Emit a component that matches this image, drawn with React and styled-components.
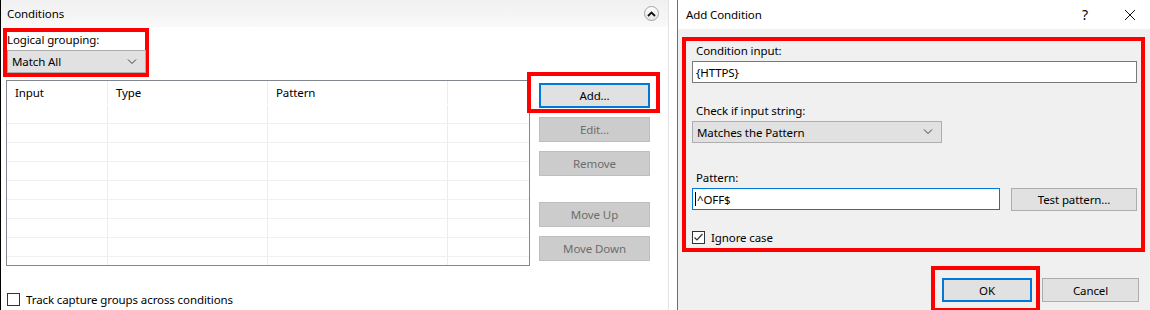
import React from 'react';
import styled, { createGlobalStyle } from 'styled-components';

const GlobalStyle = createGlobalStyle`
  html, body {
    margin: 0;
    padding: 0;
    background: #fff;
  }
  body {
    font-family: "Noto Sans", "Liberation Sans", sans-serif;
    font-size: 11.5px;
    letter-spacing: -0.1px;
    color: #000;
  }
  * {
    box-sizing: border-box;
  }
`;

const Screen = styled.div`
  display: flex;
  width: 1150px;
  height: 310px;
  overflow: hidden;
  background: #fff;
`;

/* ---------- left: Conditions panel ---------- */

const Panel = styled.section`
  width: 670px;
  height: 310px;
  display: flex;
  flex-direction: column;
  border-left: 1px solid #000;
  border-right: 1px solid #e3e3e3;
  background: #fff;
`;

const PanelHeader = styled.div`
  height: 27px;
  flex: none;
  display: flex;
  align-items: center;
  justify-content: space-between;
  padding: 0 9px 0 6px;
  background: linear-gradient(to bottom, #f0f0f0, #f9f9f9);
`;

const CollapseButton = styled.div`
  width: 15px;
  height: 15px;
  border-radius: 50%;
  border: 1px solid #a3a3a3;
  background: linear-gradient(to bottom, #ffffff, #e4e4e4);
  display: flex;
  align-items: center;
  justify-content: center;
`;

const PanelBody = styled.div`
  flex: 1;
  display: flex;
  flex-direction: column;
  padding: 1px 0 0 2px;
`;

const Highlight = styled.div`
  border: 4px solid #ff0000;
`;

const GroupingBox = styled(Highlight)`
  width: 146px;
  align-self: flex-start;
`;

const Label = styled.div`
  height: 16px;
  line-height: 16px;
  padding-left: ${p => p.$indent || 0}px;
  margin-bottom: 2px;
  white-space: nowrap;
`;

const Select = styled.div`
  height: ${p => p.$h || 23}px;
  width: ${p => p.$w}px;
  margin-right: ${p => p.$overhang || 0}px;
  display: flex;
  align-items: center;
  justify-content: space-between;
  padding: 0 8px 0 4px;
  background: #e1e1e1;
  border: 1px solid #adadad;
  white-space: nowrap;
`;

const Chevron = () => (
  <svg width="10" height="6" viewBox="0 0 10 6">
    <polyline points="1,0.5 5,4.5 9,0.5" fill="none" stroke="#3c3c3c" strokeWidth="1" />
  </svg>
);

const Workspace = styled.div`
  display: flex;
  margin-top: 3px;
  padding-left: 3px;
`;

const ListView = styled.div`
  width: 524px;
  height: 186px;
  border: 1px solid #828790;
  overflow: hidden;
  background: #fff;
`;

const Row = styled.div`
  display: flex;
  height: ${p => (p.$head ? 24 : 19)}px;
  border-bottom: 1px solid ${p => (p.$head ? 'transparent' : '#f0f0f0')};
`;

const Cell = styled.div`
  width: ${p => p.$w}px;
  flex: ${p => (p.$w ? 'none' : 1)};
  border-right: 1px solid ${p => (p.$w ? '#ececec' : 'transparent')};
  padding: 4px 0 0 8px;
  line-height: 16px;
`;

const ButtonColumn = styled.div`
  display: flex;
  flex-direction: column;
  width: 111px;
  margin-left: 9px;
  padding-top: 3px;
`;

const Button = styled.div`
  height: ${p => p.$h || 25}px;
  width: ${p => (p.$w ? `${p.$w}px` : 'auto')};
  display: flex;
  align-items: center;
  justify-content: center;
  margin-top: ${p => p.$gap || 0}px;
  background: ${p => (p.$disabled ? '#cccccc' : '#e1e1e1')};
  border: ${p => (p.$focus ? '2px solid #0078d7' : `1px solid ${p.$disabled ? '#bfbfbf' : '#adadad'}`)};
  color: ${p => (p.$disabled ? '#6d6d6d' : '#000')};
  white-space: nowrap;
`;

const AddHighlight = styled(Highlight)`
  margin: -11px -10px -5px -12px;
  padding: 7px 6px 1px 8px;
`;

const CheckRow = styled.label`
  display: flex;
  align-items: center;
  gap: 6px;
  height: 16px;
  margin-top: ${p => p.$top || 0}px;
  padding-left: ${p => p.$left || 0}px;
  white-space: nowrap;
`;

const Box = styled.span`
  width: 13px;
  height: 13px;
  flex: none;
  border: 1px solid #333;
  background: #fff;
  display: flex;
  align-items: center;
  justify-content: center;
`;

const Checkbox = ({ checked, label, top, left }) => (
  <CheckRow $top={top} $left={left}>
    <Box>
      {checked && (
        <svg width="11" height="11" viewBox="0 0 11 11">
          <polyline points="1.5,5.5 4,8 9.5,2" fill="none" stroke="#333" strokeWidth="1.2" />
        </svg>
      )}
    </Box>
    {label}
  </CheckRow>
);

/* ---------- right: Add Condition dialog ---------- */

const Gap = styled.div`
  width: 8px;
  flex: none;
`;

const Dialog = styled.section`
  flex: 1;
  display: flex;
  flex-direction: column;
  border-left: 1px solid #6e6e6e;
  background: #f0f0f0;
`;

const TitleBar = styled.div`
  height: 29px;
  flex: none;
  display: flex;
  align-items: center;
  padding-left: 8px;
  background: #fff;
`;

const Title = styled.div`
  flex: 1;
`;

const TitleIcon = styled.div`
  width: ${p => p.$w}px;
  display: flex;
  justify-content: center;
  font-size: 14px;
`;

const DialogBody = styled.div`
  flex: 1;
  display: flex;
  flex-direction: column;
  padding: 8px 5px 0 4px;
`;

const FieldsBox = styled(Highlight)`
  display: flex;
  flex-direction: column;
  padding: 2px 4px 3px 6px;
`;

const Field = styled.div`
  display: flex;
  flex-direction: column;
  margin-top: ${p => p.$top || 0}px;
`;

const TextInput = styled.div`
  height: 22px;
  width: ${p => (p.$w ? `${p.$w}px` : 'auto')};
  display: flex;
  align-items: center;
  padding-left: ${p => (p.$focus ? 2 : 3)}px;
  background: #fff;
  border: 1px solid ${p => (p.$focus ? '#0078d7' : '#7a7a7a')};
  white-space: nowrap;
`;

const Caret = styled.span`
  display: inline-block;
  width: 1px;
  height: 14px;
  background: #000;
  margin-right: 1px;
`;

const InlineRow = styled.div`
  display: flex;
  align-items: flex-start;
  gap: 11px;
`;

const Footer = styled.div`
  display: flex;
  justify-content: flex-end;
  gap: 10px;
  margin-top: 26px;
  padding-right: 6px;
`;

const OkHighlight = styled(Highlight)`
  margin: -12px -8px -10px -11px;
  padding: 8px 4px 6px 7px;
`;

const emptyRows = Array.from({ length: 9 });

export default function App() {
  return (
    <>
      <GlobalStyle />
      <Screen>
        <Panel>
          <PanelHeader>
            <span>Conditions</span>
            <CollapseButton>
              <svg width="9" height="6" viewBox="0 0 9 6">
                <polyline points="1,5 4.5,1.5 8,5" fill="none" stroke="#111" strokeWidth="1.8" />
              </svg>
            </CollapseButton>
          </PanelHeader>
          <PanelBody>
            <GroupingBox>
              <Label>Logical grouping:</Label>
              <Select $w={139} $overhang={-1}>
                Match All
                <Chevron />
              </Select>
            </GroupingBox>
            <Workspace>
              <ListView>
                <Row $head>
                  <Cell $w={101}>Input</Cell>
                  <Cell $w={160}>Type</Cell>
                  <Cell $w={180}>Pattern</Cell>
                  <Cell />
                </Row>
                {emptyRows.map((_, i) => (
                  <Row key={i}>
                    <Cell $w={101} />
                    <Cell $w={160} />
                    <Cell $w={180} />
                    <Cell />
                  </Row>
                ))}
              </ListView>
              <ButtonColumn>
                <AddHighlight>
                  <Button $focus>Add...</Button>
                </AddHighlight>
                <Button $disabled $gap={9}>Edit...</Button>
                <Button $disabled $gap={9}>Remove</Button>
                <Button $disabled $gap={26}>Move Up</Button>
                <Button $disabled $gap={9}>Move Down</Button>
              </ButtonColumn>
            </Workspace>
            <Checkbox label="Track capture groups across conditions" top={25} left={4} />
          </PanelBody>
        </Panel>

        <Gap />

        <Dialog>
          <TitleBar>
            <Title>Add Condition</Title>
            <TitleIcon $w={50}>?</TitleIcon>
            <TitleIcon $w={40}>
              <svg width="12" height="12" viewBox="0 0 12 12">
                <path d="M1 1 L11 11 M11 1 L1 11" stroke="#111" strokeWidth="1" />
              </svg>
            </TitleIcon>
          </TitleBar>
          <DialogBody>
            <FieldsBox>
              <Field>
                <Label $indent={4}>Condition input:</Label>
                <TextInput>{'{HTTPS}'}</TextInput>
              </Field>
              <Field $top={20}>
                <Label $indent={4}>Check if input string:</Label>
                <Select $w={250} $h={22}>
                  Matches the Pattern
                  <Chevron />
                </Select>
              </Field>
              <Field $top={27}>
                <Label $indent={4}>Pattern:</Label>
                <InlineRow>
                  <TextInput $w={308} $focus>
                    <Caret />^OFF$
                  </TextInput>
                  <Button $w={126} $h={23}>Test pattern...</Button>
                </InlineRow>
              </Field>
              <Checkbox checked label="Ignore case" top={18} />
            </FieldsBox>
            <Footer>
              <OkHighlight>
                <Button $focus $w={90} $h={24}>OK</Button>
              </OkHighlight>
              <Button $w={97} $h={24}>Cancel</Button>
            </Footer>
          </DialogBody>
        </Dialog>
      </Screen>
    </>
  );
}
